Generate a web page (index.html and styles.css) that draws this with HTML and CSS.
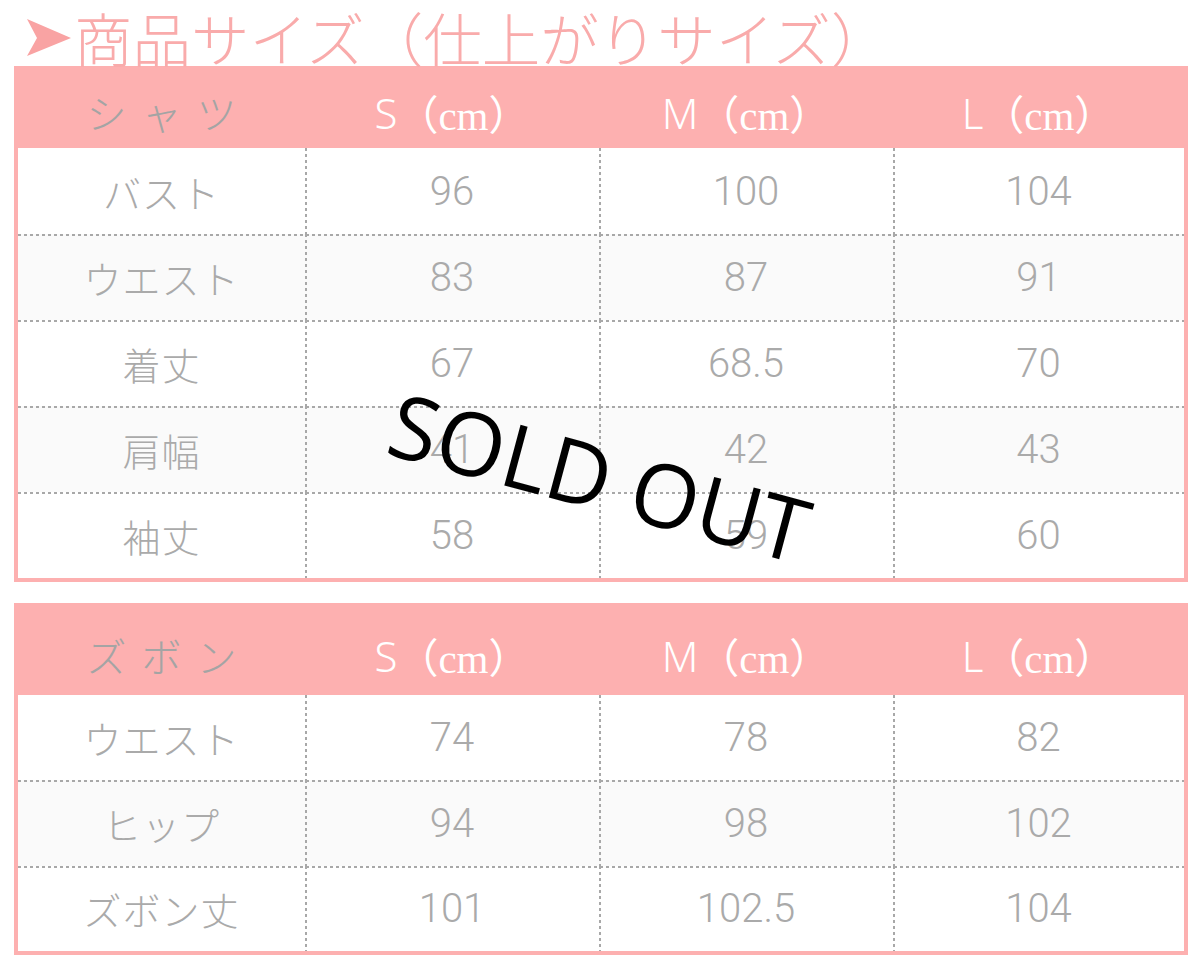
FILE: index.html
```html
<!DOCTYPE html>
<html lang="ja">
<head>
<meta charset="utf-8">
<title>商品サイズ</title>
<link rel="stylesheet" href="styles.css">
</head>
<body>
<div class="page">
  <div class="title-row">
    <svg class="arrow" width="47" height="40" viewBox="0 0 47 40" aria-hidden="true">
      <path d="M1 1 L45 20 L1 38 L11 20 Z" fill="#f9a3a3"/>
    </svg>
    <h1 class="title">商品サイズ（仕上がりサイズ）</h1>
  </div>

  <div class="size-table">
    <div class="row head head-1">
      <div class="cell name">シャツ</div>
      <div class="cell"><span class="sz">S</span><span class="unit">（cm）</span></div>
      <div class="cell"><span class="sz">M</span><span class="unit">（cm）</span></div>
      <div class="cell"><span class="sz">L</span><span class="unit">（cm）</span></div>
    </div>
    <div class="row body">
      <div class="cell label">バスト</div><div class="cell">96</div><div class="cell">100</div><div class="cell">104</div>
    </div>
    <div class="row body alt">
      <div class="cell label">ウエスト</div><div class="cell">83</div><div class="cell">87</div><div class="cell">91</div>
    </div>
    <div class="row body">
      <div class="cell label">着丈</div><div class="cell">67</div><div class="cell">68.5</div><div class="cell">70</div>
    </div>
    <div class="row body alt">
      <div class="cell label">肩幅</div><div class="cell">41</div><div class="cell">42</div><div class="cell">43</div>
    </div>
    <div class="row body">
      <div class="cell label">袖丈</div><div class="cell">58</div><div class="cell">59</div><div class="cell">60</div>
    </div>
  </div>

  <div class="size-table second">
    <div class="row head head-2">
      <div class="cell name">ズボン</div>
      <div class="cell"><span class="sz">S</span><span class="unit">（cm）</span></div>
      <div class="cell"><span class="sz">M</span><span class="unit">（cm）</span></div>
      <div class="cell"><span class="sz">L</span><span class="unit">（cm）</span></div>
    </div>
    <div class="row body r85">
      <div class="cell label">ウエスト</div><div class="cell">74</div><div class="cell">78</div><div class="cell">82</div>
    </div>
    <div class="row body alt r86">
      <div class="cell label">ヒップ</div><div class="cell">94</div><div class="cell">98</div><div class="cell">102</div>
    </div>
    <div class="row body r85">
      <div class="cell label">ズボン丈</div><div class="cell">101</div><div class="cell">102.5</div><div class="cell">104</div>
    </div>
  </div>

  <div class="sold-out">SOLD OUT</div>
</div>
</body>
</html>
```

FILE: styles.css
```css
html, body {
  margin: 0;
  padding: 0;
  background: #ffffff;
}

.page {
  position: relative;
  width: 1200px;
  height: 962px;
  font-family: "Noto Sans CJK JP", "Noto Sans", sans-serif;
}

.title-row {
  display: flex;
  align-items: flex-start;
  height: 66px;
  padding-left: 26px;
}

.arrow {
  flex: none;
  margin-top: 18px;
  margin-right: 1px;
}

.title {
  margin: 0;
  padding-top: 8px;
  font-size: 58.5px;
  line-height: 58px;
  font-weight: 300;
  color: #f9abab;
  white-space: nowrap;
}

.size-table {
  margin-left: 14px;
  width: 1166px;
  border: 4px solid #fdb0b0;
}

.size-table.second {
  margin-top: 21px;
}

.row {
  display: grid;
  grid-template-columns: 287px 294px 294px 1fr;
}

.cell {
  display: flex;
  align-items: center;
  justify-content: center;
}

.head {
  background: #fdb0b0;
  margin-top: -4px;
  margin-left: -4px;
  margin-right: -4px;
  padding: 4px 4px 0 4px;
}

.head-1 { height: 78px; }
.head-1 .cell { padding-top: 6px; }
.head-2 { height: 88px; }
.head-2 .cell { padding-top: 8px; }

.head .name {
  font-family: "Noto Sans CJK JP", sans-serif;
  font-weight: 300;
  font-size: 40px;
  letter-spacing: 15px;
  color: #a4a4a4;
  padding-left: 15px;
}

.head .sz {
  font-family: "Noto Sans", "Liberation Sans", sans-serif;
  font-weight: 300;
  font-size: 42px;
  color: #ffffff;
}

.head .unit {
  font-family: "Liberation Serif", "Noto Sans CJK JP", serif;
  font-size: 41px;
  color: #ffffff;
}

.body {
  height: 86px;
  font-family: "Roboto", "Noto Sans CJK JP", sans-serif;
  font-weight: 300;
  font-size: 40px;
  color: #aaaaaa;
  background-color: #ffffff;
}

.body.r85 { height: 85px; }
.body.r86 { height: 86px; }

.body.alt {
  background-color: #fafafa;
}

.body + .body {
  background-image: repeating-linear-gradient(to right, #a8a8a8 0 3px, transparent 3px 6px);
  background-size: 100% 2px;
  background-position: 0 0;
  background-repeat: no-repeat;
}

.body .cell + .cell {
  background-image: repeating-linear-gradient(to bottom, #a8a8a8 0 3px, transparent 3px 6px);
  background-size: 2px 100%;
  background-position: 0 0;
  background-repeat: no-repeat;
}

.body .label {
  font-family: "Noto Sans CJK JP", sans-serif;
  font-weight: 300;
  font-size: 38px;
  color: #aaaaaa;
  letter-spacing: 1px;
}

.sold-out {
  position: absolute;
  left: 600px;
  top: 476px;
  transform: translate(-50%, -50%) rotate(15deg);
  font-family: "Open Sans", sans-serif;
  font-size: 88px;
  line-height: 1;
  color: #000000;
  white-space: nowrap;
}
```
